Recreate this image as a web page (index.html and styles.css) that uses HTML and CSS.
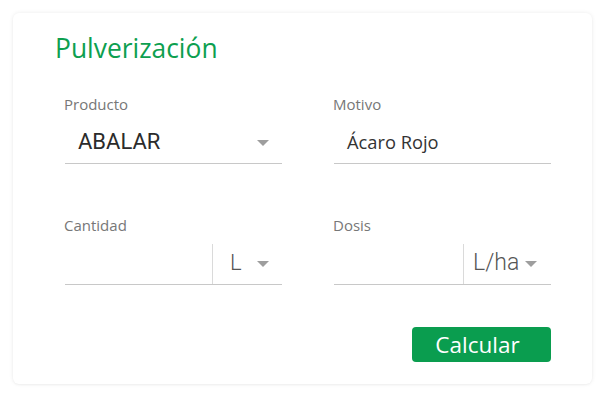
FILE: index.html
```html
<!DOCTYPE html>
<html lang="es">
<head>
<meta charset="utf-8">
<title>Pulverización</title>
<link rel="stylesheet" href="styles.css">
</head>
<body>
<div class="card">
  <h1 class="title">Pulverización</h1>
  <div class="grid">
    <div class="group">
      <div class="label">Producto</div>
      <div class="field">
        <span class="value roboto">ABALAR</span>
        <span class="arrow"></span>
      </div>
    </div>
    <div class="group">
      <div class="label">Motivo</div>
      <div class="field">
        <span class="value">Ácaro Rojo</span>
      </div>
    </div>
    <div class="group">
      <div class="label">Cantidad</div>
      <div class="field split">
        <span class="input"></span>
        <span class="unit unit-l"><span class="unit-text">L</span><span class="arrow"></span></span>
      </div>
    </div>
    <div class="group">
      <div class="label">Dosis</div>
      <div class="field split">
        <span class="input"></span>
        <span class="unit unit-lha"><span class="unit-text">L/ha</span><span class="arrow"></span></span>
      </div>
    </div>
  </div>
  <div class="actions">
    <button class="btn">Calcular</button>
  </div>
</div>
</body>
</html>
```
FILE: styles.css
```css
html, body {
  margin: 0;
  padding: 0;
  background: #fff;
}
body {
  padding: 13px;
  font-family: "Open Sans", "Noto Sans", sans-serif;
}
.card {
  width: 579px;
  height: 371px;
  box-sizing: border-box;
  padding: 17px 41px 22px 52px;
  background: #fff;
  border-radius: 6px;
  box-shadow: 0 0 4px rgba(0, 0, 0, 0.08), 0 1px 2px rgba(0, 0, 0, 0.03);
}
.title {
  margin: 0 0 28px -10px;
  font-size: 26.4px;
  line-height: 36px;
  font-weight: 400;
  color: #0d9f50;
}
.grid {
  display: grid;
  grid-template-columns: 217px 217px;
  column-gap: 52px;
  row-gap: 51px;
}
.label {
  font-size: 15px;
  line-height: 20px;
  color: #777;
  margin-bottom: 9px;
  margin-left: -1px;
}
.field {
  height: 41px;
  box-sizing: border-box;
  border-bottom: 1px solid #c8c8c8;
  display: flex;
  align-items: center;
  padding: 0 13px 3px 13px;
}
.value {
  flex: 1;
  font-size: 18.3px;
  color: #333;
}
.value.roboto {
  font-family: Roboto, "Liberation Sans", sans-serif;
  font-size: 22px;
  color: #2b2b2b;
}
.arrow {
  width: 0;
  height: 0;
  border-left: 6px solid transparent;
  border-right: 6px solid transparent;
  border-top: 6px solid #9e9e9e;
  margin-top: 2px;
}
.field.split {
  padding: 0;
  align-items: stretch;
}
.input {
  flex: 1;
}
.unit {
  border-left: 1px solid #dadada;
  display: flex;
  align-items: center;
  padding-bottom: 3px;
  box-sizing: border-box;
}
.unit-text {
  font-family: Roboto, "Liberation Sans", sans-serif;
  font-weight: 300;
  font-size: 22px;
  color: #555;
}
.unit-l {
  width: 70px;
  padding-left: 17px;
}
.unit-l .arrow {
  margin-left: 15px;
}
.unit-lha {
  width: 88px;
  padding-left: 9px;
}
.unit-lha .unit-text {
  font-size: 23px;
}
.unit-lha .arrow {
  margin-left: 6px;
}
.actions {
  display: flex;
  justify-content: flex-end;
  margin-top: 42px;
}
.btn {
  width: 139px;
  height: 35px;
  border: none;
  border-radius: 4px;
  background: #0a9d4f;
  color: #fff;
  font-family: "Open Sans", "Noto Sans", sans-serif;
  font-size: 22.5px;
  line-height: 35px;
  padding: 0 8px 0 0;
}
```
